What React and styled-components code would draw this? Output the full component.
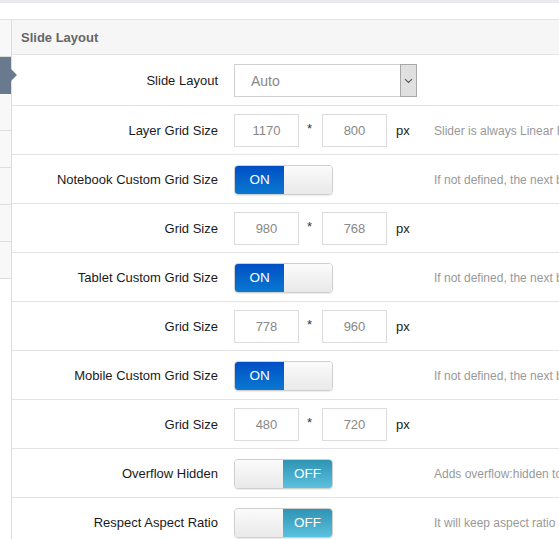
import React from "react";
import styled, { createGlobalStyle, css } from "styled-components";

const Global = createGlobalStyle`
  html, body { margin: 0; padding: 0; background: #fff; overflow: hidden; }
  body { font-family: "Liberation Sans", Arial, sans-serif; }
  * { box-sizing: border-box; }
`;

const Page = styled.div`
  width: 559px;
  height: 539px;
  overflow: hidden;
  display: flex;
  flex-direction: column;
`;

const TopStrip = styled.div`
  height: 3px;
  background: #e9e9ef;
  flex: none;
`;

const TopBand = styled.div`
  height: 16px;
  background: #fff;
  flex: none;
`;

const Body = styled.div`
  flex: 1;
  display: flex;
  border-top: 1px solid #e3e3e3;
  min-height: 0;
`;

const Sidebar = styled.div`
  width: 12px;
  flex: none;
  border-right: 1px solid #dcdcdc;
  display: flex;
  flex-direction: column;
`;

const SideItem = styled.div`
  height: 37px;
  flex: none;
  background: #f8f8f8;
  border-bottom: 1px solid #dedede;
  position: relative;
  ${(p) =>
    p.$active &&
    css`
      background: #6a7a8e;
      border-bottom-color: #6a7a8e;
      &::after {
        content: "";
        position: absolute;
        left: 11px;
        top: 12px;
        border-top: 6px solid transparent;
        border-bottom: 6px solid transparent;
        border-left: 6px solid #6a7a8e;
      }
    `}
`;

const Main = styled.div`
  flex: 1;
  min-width: 0;
  display: flex;
  flex-direction: column;
`;

const Header = styled.div`
  height: 35px;
  flex: none;
  background: #f6f6f6;
  border-bottom: 1px solid #e3e3e3;
  display: flex;
  align-items: center;
  padding-left: 9px;
  font-size: 13px;
  font-weight: bold;
  color: #666;
`;

const Row = styled.div`
  height: ${(p) => (p.$tall ? 51 : 49)}px;
  flex: none;
  display: flex;
  align-items: center;
  padding-top: 1px;
  border-bottom: 1px solid #e3e3e3;
  white-space: nowrap;
`;

const Label = styled.div`
  width: 206px;
  flex: none;
  text-align: right;
  font-size: 13px;
  color: #1a1a1a;
  margin-right: 16px;
`;

const Control = styled.div`
  width: 200px;
  flex: none;
  display: flex;
  align-items: center;
`;

const Desc = styled.div`
  flex: 1;
  min-width: 0;
  overflow: hidden;
  font-size: 12px;
  color: #999;
`;

const SelectBox = styled.div`
  width: 183px;
  height: 33px;
  border: 1px solid #d0d0d0;
  display: flex;
  align-items: stretch;
  background: #fff;
`;

const SelectText = styled.div`
  flex: 1;
  display: flex;
  align-items: center;
  padding-left: 16px;
  font-size: 14px;
  color: #888;
`;

const SelectArrow = styled.div`
  width: 17px;
  background: #e0e0e0;
  border: 1px solid #a8a8a8;
  margin: -1px -1px -1px 0;
  display: flex;
  align-items: center;
  justify-content: center;
`;

const NumInput = styled.div`
  width: 65px;
  height: 33px;
  border: 1px solid #dcdcdc;
  display: flex;
  align-items: center;
  justify-content: center;
  font-size: 13px;
  color: #888;
  background: #fff;
`;

const Times = styled.span`
  width: 23px;
  padding-left: 8px;
  font-size: 13px;
  color: #333;
  align-self: flex-start;
  margin-top: 7px;
`;

const Unit = styled.span`
  margin-left: 9px;
  font-size: 13px;
  color: #1a1a1a;
`;

const Toggle = styled.div`
  width: 99px;
  height: 30px;
  border-radius: 4px;
  border: 1px solid #cfcfcf;
  display: flex;
  overflow: hidden;
  box-shadow: 0 1px 1px rgba(0, 0, 0, 0.08);
`;

const ToggleHalf = styled.div`
  width: 49px;
  flex: none;
  display: flex;
  align-items: center;
  justify-content: center;
  font-size: 13.5px;
  color: #fff;
  ${(p) =>
    p.$kind === "on" &&
    css`
      background: linear-gradient(#004fc4, #0a78d1);
    `}
  ${(p) =>
    p.$kind === "off" &&
    css`
      background: linear-gradient(#2f93b3, #5ac1de);
    `}
  ${(p) =>
    p.$kind === "blank" &&
    css`
      flex: 1;
      background: linear-gradient(#fbfbfb, #e9e9e9);
    `}
`;

function Switch({ on }) {
  return (
    <Toggle>
      {on ? (
        <>
          <ToggleHalf $kind="on">ON</ToggleHalf>
          <ToggleHalf $kind="blank" />
        </>
      ) : (
        <>
          <ToggleHalf $kind="blank" />
          <ToggleHalf $kind="off">OFF</ToggleHalf>
        </>
      )}
    </Toggle>
  );
}

function GridInputs({ w, h }) {
  return (
    <>
      <NumInput>{w}</NumInput>
      <Times>*</Times>
      <NumInput>{h}</NumInput>
      <Unit>px</Unit>
    </>
  );
}

const rows = [
  { label: "Layer Grid Size", grid: ["1170", "800"], desc: "Slider is always Linear Responsive till the next defined Grid size has been hit." },
  { label: "Notebook Custom Grid Size", on: true, desc: "If not defined, the next bigger Layer Grid Size is the basic of Layer Grid." },
  { label: "Grid Size", grid: ["980", "768"] },
  { label: "Tablet Custom Grid Size", on: true, desc: "If not defined, the next bigger Layer Grid Size is the basic of Layer Grid." },
  { label: "Grid Size", grid: ["778", "960"] },
  { label: "Mobile Custom Grid Size", on: true, desc: "If not defined, the next bigger Layer Grid Size is the basic of Layer Grid." },
  { label: "Grid Size", grid: ["480", "720"] },
  { label: "Overflow Hidden", on: false, desc: "Adds overflow:hidden to the slider wrapping container." },
  { label: "Respect Aspect Ratio", on: false, desc: "It will keep aspect ratio and ignore max height of Layer Grid." },
];

export default function App() {
  return (
    <Page>
      <Global />
      <TopStrip />
      <TopBand />
      <Body>
        <Sidebar>
          <SideItem />
          <SideItem $active />
          <SideItem />
          <SideItem />
          <SideItem />
          <SideItem />
          <SideItem />
        </Sidebar>
        <Main>
          <Header>Slide Layout</Header>
          <Row $tall>
            <Label>Slide Layout</Label>
            <Control>
              <SelectBox>
                <SelectText>Auto</SelectText>
                <SelectArrow>
                  <svg width="9" height="6" viewBox="0 0 9 6">
                    <path d="M1 1.2 L4.5 4.5 L8 1.2" fill="none" stroke="#555" strokeWidth="1.1" />
                  </svg>
                </SelectArrow>
              </SelectBox>
            </Control>
          </Row>
          {rows.map((r, i) => (
            <Row key={i}>
              <Label>{r.label}</Label>
              <Control>
                {r.grid ? <GridInputs w={r.grid[0]} h={r.grid[1]} /> : <Switch on={r.on} />}
              </Control>
              {r.desc && <Desc>{r.desc}</Desc>}
            </Row>
          ))}
        </Main>
      </Body>
    </Page>
  );
}
